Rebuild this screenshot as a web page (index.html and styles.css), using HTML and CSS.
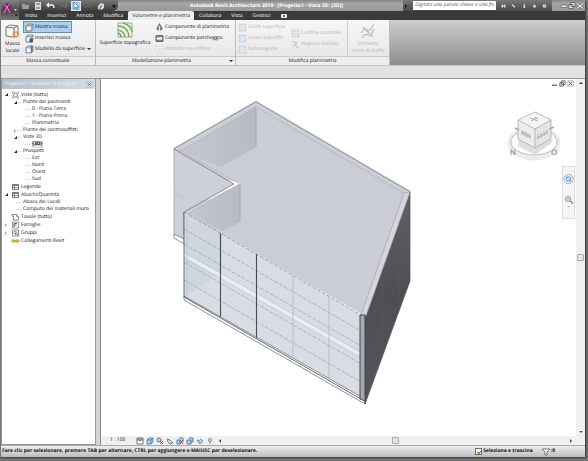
FILE: index.html
```html
<!DOCTYPE html>
<html lang="it">
<head>
<meta charset="utf-8">
<title>Autodesk Revit Architecture 2010</title>
<link rel="stylesheet" href="styles.css">
</head>
<body>
<svg class="defs" aria-hidden="true">
  <symbol id="box" viewBox="0 0 16 16"><path d="M2 5l3-3h9v9l-3 3H2z" fill="#fff" stroke="#4a5c72" stroke-width="1.4"/><path d="M2 5h9v9M11 5l3-3" fill="none" stroke="#4a5c72" stroke-width="1.2"/></symbol>
  <symbol id="sheet" viewBox="0 0 16 16"><path d="M2 3h12v10H2z" fill="#fff" stroke="#555" stroke-width="1.6"/><path d="M2 5h12M2 9h12M6 3v10" stroke="#555" stroke-width="1.3"/></symbol>
  <symbol id="grid" viewBox="0 0 16 16"><path d="M2 2h12v12H2z" fill="#d3dde8" stroke="#b8c3cf"/><path d="M2 6h12M2 10h12M6 2v12M10 2v12" stroke="#f1f5f8"/></symbol>
  <symbol id="close" viewBox="0 0 16 16"><path d="M2 2h12v12H2z" fill="#e7e9f2" stroke="#7d8499"/><path d="M5 5l6 6M11 5l-6 6" stroke="#555b70" stroke-width="2"/></symbol>
</svg>
<div class="window">
  <header class="header">
    <button class="app" aria-label="Menu applicazione">
      <svg viewBox="0 0 18 19"><path d="M2 3l5-1 1 2 3 1-2 3 2 5-3-2-2 3-1-4-3 1z" fill="#8b2667"/><path d="M2 3l4 3 2-2M6 6l3 6M3 12l3-6" stroke="#e8b7d2" stroke-width=".8" fill="none"/><path d="M13 8h3l-1.500 2z" fill="#ddd"/><path d="M14 15h3l-1.500-2z" fill="#222"/></svg>
    </button>
    <div class="bars">
      <div class="titlebar">
        <div class="quick">
          <button aria-label="Apri"><svg viewBox="0 0 10 10"><path d="M1 3h3l1 1h3v4H1z" fill="#9b9b9b"/></svg></button>
          <button aria-label="Salva"><svg viewBox="0 0 10 10"><path d="M2 1h6v8H2z" fill="#ddd"/><path d="M3 3h4M3 7h4" stroke="#555"/></svg></button>
          <button aria-label="Annulla"><svg viewBox="0 0 10 10"><path d="M3 2L1 4l2 2M1 4h5q2 0 2 3" fill="none" stroke="#eee" stroke-width="1.300"/></svg></button>
          <button aria-label="Ripeti"><svg viewBox="0 0 10 10"><path d="M7 3l2 2-2 2M9 5H3" fill="none" stroke="#777"/></svg></button>
          <button class="picked" aria-label="Seleziona"><svg viewBox="0 0 10 10"><path d="M3 1v7l2-2 1 3 1-1-1-2h2z" fill="#fff" stroke="#37658d" stroke-width=".7"/></svg></button>
          <button aria-label="Taglia"><svg viewBox="0 0 10 10"><path d="M2 7l2-2M6 5h2" stroke="#777"/></svg></button>
          <button aria-label="Vista 3D"><svg viewBox="0 0 10 10"><path d="M2 5l3-3 3 1v4L5 9 2 8z" fill="#ddd"/><path d="M4 9V6l2-1" stroke="#555" fill="none"/></svg></button>
          <button aria-label="Personalizza"><svg viewBox="0 0 10 10"><path d="M4 4h4L6 7z" fill="#111"/></svg></button>
        </div>
        <div class="title">Autodesk Revit Architecture 2010 - [Progetto1 - Vista 3D: {3D}]</div>
        <div class="info">
          <svg viewBox="0 0 5 10"><path d="M2 3v4l2-2z" fill="#111"/></svg>
          <input type="text" aria-label="Cerca" placeholder="Digitare una parola chiave o una frase">
          <button aria-label="Trova"><svg viewBox="0 0 10 10"><path d="M2 2h2v6H1V5zM6 2h2l1 3v3H6zM4 4h2v2H4z" fill="#ddd"/></svg></button>
          <button aria-label="Chiave"><svg viewBox="0 0 10 10"><path d="M2 2l1 2 4 4 1-1-4-4z" fill="#fff" stroke="#eee"/></svg></button>
          <button aria-label="Comunicazioni"><svg viewBox="0 0 10 10"><path d="M3 2h4L5 4l2 2-2 3H2l2-3-1-1z" fill="#eee"/></svg></button>
          <button aria-label="Preferiti"><svg viewBox="0 0 10 10"><path d="M5 1l1 3h3L7 6l1 3-3-2-3 2 1-3-2-2h3z" fill="#eee"/></svg></button>
          <button aria-label="Guida"><svg viewBox="0 0 10 10"><circle cx="5" cy="5" r="3.600" fill="#eee"/><path d="M4 4q0-1 1-1t1 1-1 2M5 7v.8" fill="none" stroke="#444"/></svg></button>
        </div>
        <div class="controls">
          <button aria-label="Riduci"><svg viewBox="0 0 8 10"><rect x="1" y="4.500" width="6" height="2.500" rx="1" fill="#eee" stroke="#555" stroke-width=".7"/></svg></button>
          <button aria-label="Ripristina"><svg viewBox="0 0 8 10"><path d="M3 2h4v4H3zM1 4h4v4H1z" fill="#eee" stroke="#555" stroke-width=".8"/></svg></button>
          <button aria-label="Chiudi"><svg viewBox="0 0 8 10"><path d="M1 3l6 5M7 3L1 8" stroke="#555" stroke-width="2.400"/><path d="M1 3l6 5M7 3L1 8" stroke="#eee" stroke-width="1.200"/></svg></button>
        </div>
      </div>
      <nav class="tabs">
        <button>Inizio</button><button>Inserisci</button><button>Annota</button><button>Modifica</button><button class="active">Volumetrie e planimetria</button><button>Collabora</button><button>Vista</button><button>Gestisci</button><button aria-label="Riduci barra"><svg viewBox="0 0 8 6"><rect x="1" y="1" width="6" height="4" rx="1" fill="#eee"/><circle cx="4" cy="3" r="1" fill="#333"/></svg></button>
      </nav>
    </div>
  </header>

  <div class="ribbon">
    <section class="panel mass">
      <div class="tools">
        <button class="big"><svg viewBox="0 0 16 16"><path d="M2 4l4-2 8 1v9l-4 2-8-1z" fill="#f5f5f5" stroke="#777"/><path d="M2 4l8 1v9M10 5l4-2" fill="none" stroke="#777"/><path d="M12 8v7M8.500 11.500h7M9.500 9l5 5M14.500 9l-5 5" stroke="#d88a32" stroke-width="1.200"/><circle cx="12" cy="11.500" r="1.200" fill="#fff"/></svg>Massa<br>locale</button>
        <div class="stack">
          <button class="small on"><svg viewBox="0 0 16 16"><use href="#box"/><path d="M1 5h8" stroke="#dc9b3b" stroke-width="2"/></svg>Mostra massa</button>
          <button class="small"><svg viewBox="0 0 16 16"><use href="#box"/><path d="M8 8h6v7H8z" fill="#335d87"/></svg>Inserisci massa</button>
          <button class="small"><svg viewBox="0 0 16 16"><use href="#box"/><path d="M12 1v11" stroke="#397ebd" stroke-width="3"/></svg>Modello da superficie<i class="caret"></i></button>
        </div>
      </div>
      <h2>Massa concettuale</h2>
    </section>
    <section class="panel site">
      <div class="tools">
        <button class="big"><svg viewBox="0 0 16 16"><path d="M1 1h14v14H1z" fill="#edf5e7" stroke="#9a9"/><path d="M1 4q10 0 11 11M1 8q6 1 7 7M1 11q3 1 3 4M6 1q8 2 9 9" fill="none" stroke="#79a665" stroke-width="1.500"/></svg>Superficie topografica</button>
        <div class="stack">
          <button class="small"><svg viewBox="0 0 16 16"><path d="M8 1l5 9q-1 3-5 3t-5-3z" fill="#6d9563" stroke="#355a35"/><path d="M8 5v10" stroke="#e8f2e1" stroke-width="2"/></svg>Componente di planimetria</button>
          <button class="small"><svg viewBox="0 0 16 16"><path d="M2 3h12v10H2z" fill="#fff" stroke="#444" stroke-width="1.700"/><path d="M2 5h12M2 11h12" stroke="#444" stroke-width="1.500"/></svg>Componente parcheggio</button>
          <button class="small" disabled><svg viewBox="0 0 16 16"><path d="M2 2h12v12H2z" fill="#f5f5f5" stroke="#ccc"/><path d="M5 11V7l6-2v6z" fill="#ddd"/></svg>Piattaforma edificio</button>
        </div>
      </div>
      <h2>Modellazione planimetria<i class="caret"></i></h2>
    </section>
    <section class="panel modify">
      <div class="tools">
        <div class="stack">
          <button class="small" disabled><svg><use href="#grid"/></svg>Dividi superficie</button>
          <button class="small" disabled><svg><use href="#grid"/></svg>Unisci superfici</button>
          <button class="small" disabled><svg><use href="#grid"/></svg>Sottoregione</button>
        </div>
        <div class="stack pair">
          <button class="small" disabled><svg><use href="#grid"/></svg>Confine catastale</button>
          <button class="small" disabled><svg viewBox="0 0 16 16"><path d="M2 3h5l3 10h4M11 3L3 13" fill="none" stroke="#bbb" stroke-width="1.600"/></svg>Regione livellata</button>
        </div>
        <button class="big label" disabled><svg viewBox="0 0 16 16"><path d="M1 10q4-6 6-3t7-6M2 15q3-5 6-3t6-6M3 4l10 10" fill="none" stroke="#bcbcbc" stroke-width="1.200"/></svg>Etichetta<br>curve di livello</button>
      </div>
      <h2>Modifica planimetria</h2>
    </section>
  </div>
  <div class="options"></div>

  <main class="work">
    <aside class="browser">
      <div class="browser-head"><span>Progetto1 - Browser di progetto</span><button aria-label="Chiudi browser"><svg><use href="#close"/></svg></button></div>
      <ul class="tree">
        <li class="root open"><svg viewBox="0 0 16 16"><circle cx="8" cy="8" r="4" fill="none" stroke="#555" stroke-width="1.500"/><path d="M2 5V2h3M11 2h3v3M14 11v3h-3M5 14H2v-3" fill="none" stroke="#777" stroke-width="1.500"/></svg>Viste (tutto)</li>
        <li class="branch open">Piante dei pavimenti</li>
        <li class="leaf">0 - Piano Terra</li>
        <li class="leaf">1 - Piano Primo</li>
        <li class="leaf">Planimetria</li>
        <li class="branch shut">Piante dei controsoffitti</li>
        <li class="branch open">Viste 3D</li>
        <li class="leaf"><b>{3D}</b></li>
        <li class="branch open">Prospetti</li>
        <li class="leaf">Est</li>
        <li class="leaf">Nord</li>
        <li class="leaf">Ovest</li>
        <li class="leaf">Sud</li>
        <li class="root"><svg><use href="#sheet"/></svg>Legende</li>
        <li class="root open"><svg><use href="#sheet"/></svg>Abachi/Quantità</li>
        <li class="branch">Abaco dei Locali</li>
        <li class="branch">Computo dei materiali muro</li>
        <li class="root"><svg viewBox="0 0 16 16"><path d="M1 3h9l4 4v7H4V6H1z" fill="#fff" stroke="#666" stroke-width="1.500"/><path d="M10 3v4h4" fill="none" stroke="#666"/></svg>Tavole (tutto)</li>
        <li class="root shut"><svg viewBox="0 0 16 16"><path d="M2 2h12v12H2z" fill="#fff" stroke="#6c7482" stroke-width="1.500"/><path d="M5 12V5h6M5 8h5" fill="none" stroke="#4b6994" stroke-width="2"/></svg>Famiglie</li>
        <li class="root shut"><svg viewBox="0 0 16 16"><path d="M2 2h12v12H2z" fill="#fff" stroke="#6c7482" stroke-width="1.500"/><path d="M5 5h4v4H5zM8 8h4v4H8z" fill="none" stroke="#555"/></svg>Gruppi</li>
        <li class="root"><svg viewBox="0 0 16 16"><path d="M1 6h6v4H1zM9 6h6v4H9zM5 8h6" fill="#ffe27a" stroke="#c49a13" stroke-width="2"/></svg>Collegamenti Revit</li>
      </ul>
    </aside>

    <section class="view">
      <div class="viewport">
        <svg class="model" viewBox="101 79 475 357" role="img" aria-label="Modello 3D">
          <defs>
            <linearGradient id="dark" x1="0" y1="0" x2="0" y2="1"><stop offset="0" stop-color="#606167"/><stop offset=".5" stop-color="#4d4e53"/><stop offset="1" stop-color="#55565b"/></linearGradient>
            <linearGradient id="inner" x1="0" x2="1"><stop offset="0" stop-color="#c6c8cf"/><stop offset="1" stop-color="#b9bbc3"/></linearGradient>
            <clipPath id="facade"><path d="M184 212L361 315V400L184 297z"/></clipPath>
          </defs>
          <path d="M174 149L256 102 410 192 365 316 184 212 241 183 227 180 174 235z" fill="#cbcdd6"/>
          <path d="M174 149L234 184 184 212V243L174 237z" fill="#cdd0d9"/>
          <path d="M181 151L256 107V147L221 167z" fill="url(#inner)"/>
          <path d="M188 214L240 184V222L222 231z" fill="url(#inner)"/>
          <path d="M174 191l10 5M174 194l10 5" stroke="#b9bcc4" stroke-width=".8"/>
          <path d="M174 234v4l10 6v-5z" fill="#fff" stroke="#777" stroke-width=".8"/>
          <path d="M174 149L256 102 410 192" fill="none" stroke="#d6d8dd" stroke-width="3"/>
          <path d="M181 151L256 107 403 193M179 150l61 34-52 30" fill="none" stroke="#a8abb2" stroke-width=".6"/>
          <path d="M184 234V212l50-28-60-35 82-47 154 90" fill="none" stroke="#808389" stroke-width=".9"/>
          <path d="M256 107v40M240 184v38M174 149v86" fill="none" stroke="#999da5" stroke-width=".7"/>
          <path d="M410 192V281L365 404V316z" fill="url(#dark)" stroke="#4e5056" stroke-width=".7"/>
          <path d="M409 217L366 337M409 246l-43 124M399 224v85M382 269v89" stroke="#5b5d63" stroke-width=".5"/>
          <path d="M404 193l6-1-44 124-5-1z" fill="#d4d6dc" stroke="#96989e" stroke-width=".6"/>
          <path d="M184 212L361 315V400L184 297z" fill="#d8dde3"/>
          <path d="M188 214l34 19v39l-34 23z" fill="#c8d0d7" opacity=".5"/>
          <g clip-path="url(#facade)">
            <path d="M184 255L361 355" stroke="#e9eef2" stroke-width="3"/>
            <path d="M184 252L361 352M184 258L361 358" stroke="#c3cad1" stroke-width=".6"/>
            <path d="M184 229L361 331M184 244L361 346M184 262L361 364M184 280L361 382" stroke="#9fa7ae" stroke-width=".8" stroke-dasharray="4 1.500"/>
          </g>
          <path d="M184 212L361 315" stroke="#94989f" stroke-width=".9" stroke-dasharray="4 1.500"/>
          <path d="M184 296v4l181 104v-5z" fill="#fff" stroke="#70747a" stroke-width=".8"/>
          <path d="M184 212v85l177 102" fill="none" stroke="#55595f" stroke-width=".9"/>
          <path d="M187 216v80" stroke="#aab1b8" stroke-width=".7"/>
          <path d="M220.500 233v84M256.500 254v84" stroke="#484d54" stroke-width="1.100"/>
          <path d="M293 275v83M329 296v84" stroke="#b0b8c0" stroke-width=".8"/>
          <path d="M360 315h5v86l-5-2z" fill="#a6a9ae" stroke="#44474c" stroke-width="1"/>
          <path d="M365 400v4" stroke="#44474c" stroke-width="1"/>
          <g class="viewcube">
            <ellipse cx="534" cy="143" rx="24" ry="15" fill="none" stroke="#ececec" stroke-width="5"/>
            <ellipse cx="534" cy="142" rx="23" ry="13" fill="#fff" stroke="#bdbdbd"/>
            <path d="M518 146l17 9 18-13-4-6h-30z" fill="#dfdfdf"/>
            <path d="M518 120l17-8 16 8-16 9z" fill="#f4f4f4"/><path d="M518 120l17 9v19l-17-9z" fill="#ededed"/><path d="M551 120l-16 9v19l16-9z" fill="#e4e4e4"/>
            <path d="M518 120l17-8 16 8v19l-16 9-17-9zM518 120l17 9 16-9M535 129v19" fill="none" stroke="#aaa" stroke-width=".8"/>
            <path d="M530 118l8 3M531 121l6-3M534 117l4 2M522 130v5M524 131v5M526 132v5M528 133v5M530 134v5M521 132l10 5M537 138l11-6M538 134v5M541 133v5M544 131v5M547 130v4" fill="none" stroke="#aaa" stroke-width=".9"/>
            <path d="M515 128l4 2M549 129l5-2" stroke="#aaa" stroke-width="1.500"/>
            <text x="510" y="155">N</text><text x="551" y="155">O</text>
          </g>
        </svg>
        <div class="doc-controls">
          <button aria-label="Riduci vista"><svg viewBox="0 0 8 8"><path d="M1 6h6" stroke="#666" stroke-width="1.500"/></svg></button>
          <button aria-label="Ripristina vista"><svg viewBox="0 0 8 8"><path d="M3 1h4v4H3zM1 3h4v4H1z" fill="#fff" stroke="#555"/></svg></button>
          <button aria-label="Chiudi vista"><svg viewBox="0 0 8 8"><path d="M1 1h6v6H1z" fill="none" stroke="#aaa"/><path d="M2 2l4 4M6 2L2 6" stroke="#555"/></svg></button>
        </div>
        <div class="navbar">
          <button aria-label="Ruota di navigazione"><svg viewBox="0 0 12 16"><circle cx="6" cy="8" r="5" fill="#e5f1fb" stroke="#8bb4d4"/><circle cx="6" cy="8" r="2.500" fill="none" stroke="#5f86a8"/><path d="M3 5l6 6" stroke="#769dbd"/></svg></button>
          <button aria-label="Zoom"><svg viewBox="0 0 12 16"><circle cx="5.500" cy="7" r="3" fill="#ccc" stroke="#aaa"/><path d="M8 9l3 3" stroke="#888" stroke-width="1.500"/><path d="M5 15h2" stroke="#999"/></svg></button>
        </div>
      </div>
      <div class="vscroll"><svg viewBox="0 0 8 8"><path d="M2 5h4L4 3z" fill="#333"/></svg><span class="thumb"></span><svg viewBox="0 0 8 8"><path d="M2 3h4L4 5z" fill="#555"/></svg></div>
      <div class="viewbar">
        <span class="scale">1 : 100</span>
        <button aria-label="Livello di dettaglio"><svg viewBox="0 0 8 8"><path d="M1 1h6v6H1zM1 3h6M2 1l2 3 2-3" fill="#fff" stroke="#555" stroke-width=".8"/></svg></button>
        <button aria-label="Stile"><svg viewBox="0 0 8 8"><path d="M1 3l2-2h4v4L5 7H1zM1 3h4v4M5 3l2-2" fill="#a8d2f1" stroke="#3a79ac" stroke-width=".8"/></svg></button>
        <button aria-label="Percorso sole"><svg viewBox="0 0 8 8"><circle cx="3" cy="3" r="2" fill="#c9dced" stroke="#668"/><path d="M4 4l3 3M7 4L4 7" stroke="#c33"/></svg></button>
        <button aria-label="Ombre"><svg viewBox="0 0 8 8"><path d="M1 2l3 1 3 3-3 1-2-2z" fill="#cce0ef" stroke="#68839c"/></svg></button>
        <button aria-label="Ritaglio"><svg viewBox="0 0 8 8"><path d="M1 3h3v4H1zM3 1h4v4" fill="#bcd7ed" stroke="#467eaf"/><path d="M4 3l3 4M7 3L4 7" stroke="#c33"/></svg></button>
        <button aria-label="Area ritaglio"><svg viewBox="0 0 8 8"><path d="M1 3h4v4H1zM3 1h4v4H5" fill="#bcd7ed" stroke="#467eaf"/></svg></button>
        <button aria-label="Nascondi"><svg viewBox="0 0 8 8"><path d="M1 3q2 2 3 0t3 1l-3 3z" fill="#bcd2e7" stroke="#557694" stroke-width=".8"/></svg></button>
        <button aria-label="Mostra"><svg viewBox="0 0 8 8"><circle cx="4" cy="3" r="1.500" fill="#fff" stroke="#6588a8"/><path d="M4 4v3" stroke="#6588a8"/></svg></button>
        <div class="hscroll"><svg viewBox="0 0 8 8"><path d="M5 2v4L3 4z" fill="#444"/></svg><span class="thumb"></span><svg viewBox="0 0 8 8"><path d="M3 2v4l2-2z" fill="#444"/></svg></div>
      </div>
    </section>
  </main>

  <footer class="status">
    <span class="hint">Fare clic per selezionare, premere TAB per alternare, CTRL per aggiungere e MAIUSC per deselezionare.</span>
    <label><input type="checkbox" checked>Seleziona e trascina</label>
    <span class="filter"><svg viewBox="0 0 8 8"><path d="M0 1h8L5 4v3H3V4z" fill="#fff" stroke="#555" stroke-width=".8"/></svg>:0</span>
  </footer>
</div>
</body>
</html>
```

FILE: styles.css
```css
* { box-sizing: border-box; }
body {
  margin: 0;
  height: 100vh;
  padding: 0 3px 4px 0;
  background: #777;
  font: 5px/7px "Open Sans", "Noto Sans", sans-serif;
  text-rendering: geometricPrecision;
  color: #111;
  overflow: hidden;
}
button {
  margin: 0;
  padding: 0;
  border: 0;
  background: none;
  font: inherit;
  color: inherit;
  text-rendering: inherit;
}
svg { display: block; }
.defs { position: absolute; width: 0; height: 0; }
.window {
  display: flex;
  flex-direction: column;
  height: 100%;
  background: #e2e2e2;
  border-left: 1px solid #777;
  box-shadow: 1px 1px 2px #333;
}

.header { display: flex; height: 20px; background: #3a3a3a; }
.app { width: 18px; background: linear-gradient(#858585, #4a4a4a 55%, #777); }
.app svg { width: 18px; height: 19px; }
.bars { flex: 1; min-width: 0; }
.titlebar {
  display: flex;
  justify-content: space-between;
  height: 11px;
  background: linear-gradient(#858585, #a5a5a5 30%, #989898);
}
.quick {
  display: flex;
  align-items: center;
  justify-content: space-between;
  width: 99px;
  padding: 0 0 0 2px;
  background: linear-gradient(#777, #3d3d3d);
  border-radius: 0 0 5px 0;
}
.quick svg, .info svg { width: 10px; height: 10px; }
.picked { background: #a3cdf0; outline: 1px solid #d5e9fa; outline-offset: -1px; }
.title {
  flex: 1;
  padding-left: 72px;
  line-height: 12px;
  color: #fff;
  font-weight: bold;
  white-space: nowrap;
}
.info {
  display: flex;
  align-items: center;
  justify-content: space-between;
  width: 149px;
  padding-right: 5px;
  background: linear-gradient(#777, #484848);
}
.info svg:first-child { width: 5px; }
.info input {
  width: 83px;
  height: 9px;
  padding: 0 2px;
  border: 0;
  border-radius: 0;
  background: #fff;
  font: italic 5px/9px "Open Sans", "Noto Sans", sans-serif;
  text-rendering: inherit;
}
.info input::placeholder { color: #555; }
.controls { display: flex; padding-left: 8px; width: 33px; }
.controls svg { width: 8px; height: 11px; }

.tabs { display: flex; height: 9px; padding-left: 1px; color: #fff; line-height: 10px; }
.tabs button { flex: none; padding: 0 5px; }
.tabs .active {
  padding: 0 4px;
  background: #eee;
  color: #222;
  border-radius: 2px 2px 0 0;
}
.tabs svg { width: 8px; height: 6px; }

.ribbon {
  display: flex;
  height: 45px;
  background: linear-gradient(#cecece, #8d8d8d);
}
.panel {
  display: flex;
  flex-direction: column;
  background: linear-gradient(#f6f6f6, #e5e5e5);
  border-right: 1px solid #bbb;
}
.mass { width: 95px; }
.site { width: 140px; }
.modify { width: 154px; }
.tools { display: flex; flex: 1; gap: 1px; padding: 1px 1px 0; }
.panel h2 {
  height: 9px;
  margin: 0;
  background: #eee;
  border-top: 1px solid #ccc;
  font: inherit;
  line-height: 8px;
  text-align: center;
}
.panel h2 .caret { float: right; margin: 3px 2px; }
.big { display: flex; flex-direction: column; align-items: center; text-align: center; white-space: nowrap; }
.big svg { width: 16px; height: 16px; margin: 1px 0 2px; }
.mass .big { display: block; width: 21px; }
.mass .big svg { margin-left: 2px; }
.site .big { width: 56px; }
.label { display: block; flex: 1; border-left: 1px solid #ccc; }
.label svg { margin-left: auto; margin-right: auto; }
.stack { display: flex; flex-direction: column; gap: 1px; padding-top: 1px; }
.small { display: flex; align-items: center; gap: 1px; height: 10px; padding: 0 1px; white-space: nowrap; }
.small svg { width: 9px; height: 9px; }
.small.on { width: 47px; background: #acd0f3; outline: 1px solid #5b92c8; }
.caret { border: 2px solid transparent; border-top-color: #333; border-bottom: 0; margin-left: 1px; }
button:disabled { color: #b4b4b4; }
.modify .stack { width: 52px; }
.modify .pair { justify-content: center; width: 56px; }
.options { height: 14px; background: #e2e2e2; border-top: 1px solid #c6c6c6; border-bottom: 1px solid #999; }

.work { display: flex; flex: 1; min-height: 0; background: #d2d2d2; gap: 4px; }
.browser { width: 95px; background: #fff; border: 1px solid #999; border-top: 0; }
.browser-head {
  display: flex;
  justify-content: space-between;
  align-items: center;
  height: 10px;
  padding: 0 2px;
  background: linear-gradient(90deg, #b1bfcb, #d4dce5);
  color: #edf2f6;
  white-space: nowrap;
}
.browser-head svg { width: 7px; height: 7px; }
.tree {
  display: grid;
  grid-auto-rows: 1fr;
  height: 154px;
  margin: 2px 0 0;
  padding: 0;
  list-style: none;
  white-space: nowrap;
}
.tree li { position: relative; display: flex; align-items: center; }
.tree svg { width: 9px; height: 8px; margin-right: 1px; }
.tree b { background: #ddd; }
.root { padding-left: 9px; }
.branch { padding-left: 21px; }
.leaf { padding-left: 30px; }
.branch::before, .leaf::before { content: ""; width: 5px; margin: 0 2px 0 -7px; border-top: 1px dotted #ccc; }
.open::after, .shut::after {
  content: "";
  position: absolute;
  left: 3px;
  top: 2px;
  border: 0 solid transparent;
}
.open::after { border-width: 0 0 3px 3px; border-bottom-color: #222; }
.shut::after { border-width: 2px 0 2px 2px; border-left-color: #aaa; }
.branch::after { left: 12px; }

.view {
  display: grid;
  grid-template: 1fr 9px / 1fr 9px;
  flex: 1;
  min-width: 0;
  background: #fff;
  border-left: 1px solid #888;
}
.viewport { position: relative; min-height: 0; }
.model { width: 100%; height: 100%; }
.viewcube text { font: bold 8px "Liberation Sans", sans-serif; fill: #999; }
.doc-controls { position: absolute; top: 1px; right: 2px; display: flex; gap: 1px; }
.doc-controls svg { width: 7px; height: 7px; }
.navbar {
  position: absolute;
  top: 87px;
  right: 1px;
  width: 13px;
  padding: 3px 0 6px;
  border: 1px solid #ddd;
  background: #f5f5f5;
}
.navbar svg { width: 11px; height: 18px; }
.vscroll, .hscroll { display: flex; justify-content: space-between; align-items: center; background: #f0f0f0; }
.vscroll { flex-direction: column; }
.vscroll svg, .hscroll svg { width: 8px; height: 8px; }
.thumb { width: 7px; height: 7px; border: 1px solid #aaa; border-radius: 1px; background: #e5e5e5; }
.viewbar { grid-column: 1 / -1; display: flex; align-items: center; background: #f0f0f0; }
.viewbar button { width: 10px; }
.viewbar button svg { width: 8px; height: 8px; }
.scale { width: 35px; padding-left: 9px; }
.hscroll { flex: 1; padding-right: 10px; }

.status {
  display: flex;
  align-items: center;
  height: 12px;
  padding: 0 30px 0 1px;
  background: linear-gradient(#eee, #bdbdbd);
  border-top: 1px solid #aaa;
  font-weight: bold;
  white-space: nowrap;
}
.hint { flex: 1; }
.status label { display: flex; align-items: center; gap: 1px; }
.status input {
  appearance: none;
  width: 7px;
  height: 7px;
  margin: 0;
  border: 1px solid #587a57;
  background: #fff;
}
.status input:checked::after {
  content: "";
  display: block;
  width: 4px;
  height: 2px;
  margin: 1px 0 0 1px;
  border: solid #398b33;
  border-width: 0 0 1px 1px;
  transform: rotate(-45deg);
}
.filter { display: flex; align-items: center; gap: 1px; margin-left: 9px; }
.filter svg { width: 8px; height: 8px; }
```
